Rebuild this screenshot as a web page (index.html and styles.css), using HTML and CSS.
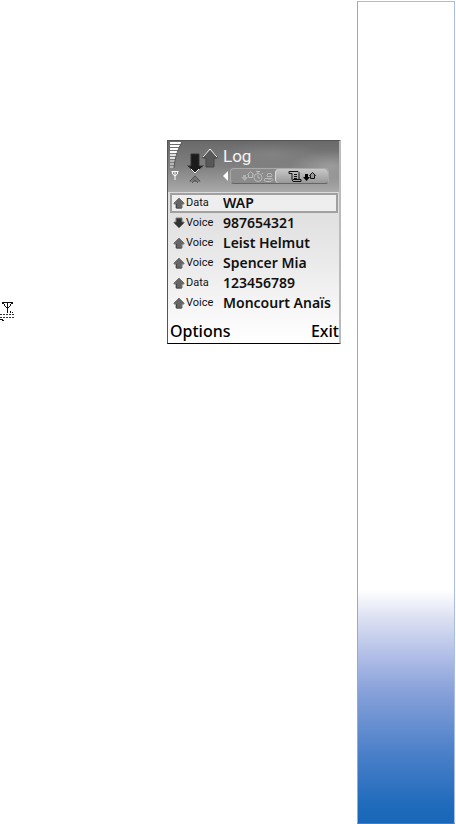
FILE: index.html
```html
<!DOCTYPE html>
<html lang="en">
<head>
  <meta charset="UTF-8" />
  <meta name="viewport" content="width=device-width, initial-scale=1.0"/>
  <title>Log</title>
  <link rel="stylesheet" href="styles.css">
</head>
<body>

  <main class="page">
    <!-- Network symbol in the margin -->
    <svg class="margin-icon" width="14" height="20" viewBox="0 0 14 20" shape-rendering="crispEdges" aria-hidden="true">
      <path d="M2 0h11v1H2zM2 1h2v1H2zM11 1h2v1h-2zM4 2h1v2H4zM10 2h1v2h-1zM5 4h1v1H5zM9 4h1v1H9zM6 5h3v1H6zM7 1h1v10H7z" fill="#111"/>
      <path d="M10 9h1v2h-1zM12 10h1v1h-1zM0 17h3v1H0zM2 18h2v1H2z" fill="#111"/>
      <path d="M0 12.500h14M0 15.500h14" stroke="#333" stroke-dasharray="2 1"/>
    </svg>

    <!-- Phone screen -->
    <section class="phone">
      <header class="top">
        <svg class="status" width="54" height="50" viewBox="0 0 54 50" aria-hidden="true">
          <!-- Signal bars -->
          <g fill="#fff" shape-rendering="crispEdges">
            <path d="M2 1h11v2H2zM2 4h10v2H2zM2 7h9v2H2zM2 10h8v2H2z"/>
            <path d="M2 13h7v2H2zM2 16h6v2H2z" fill="#e2e2e2"/>
            <path d="M2 19h5v2H2zM2 22h5v2H2zM2 25h4v2H2z" fill="#b8b8b8"/>
          </g>
          <path d="M14 1C10 8 7 16 6 27" fill="none" stroke="#555"/>
          <!-- Antenna -->
          <path d="M3.500 30.500h7M4.500 31v2l2.500 2 2.500-2v-2M7 30v9" fill="none" stroke="#fff"/>
          <!-- Up arrow -->
          <path d="M42 8l7 7v2h-3v9h-8v-9h-3v-2z" fill="#585858" stroke="#444"/>
          <path d="M35 16l7-8 7 8" fill="none" stroke="#fff"/>
          <!-- Down arrow -->
          <path d="M23 13h8v12h5l-9 7-8-7h4z" fill="#1b1b1b" stroke="#333"/>
          <path d="M19 25l8 7 9-7" fill="none" stroke="#888"/>
          <path d="M23 28l4 4 4-4" fill="none" stroke="#fff"/>
          <!-- Reflection -->
          <path d="M21 41l6-7 6 7z" fill="#777"/>
          <path d="M22 40l5-5 5 5M24 42l3-3 3 3" fill="none" stroke="#555"/>
        </svg>
        <div class="heading">
          <h1 class="title">Log</h1>
          <nav class="tabs">
            <svg class="previous" width="5" height="10" viewBox="0 0 5 10" aria-hidden="true"><path d="M5 0v10L0 5z" fill="#fff"/></svg>
            <div class="tab-bar">
              <button class="tab" type="button" aria-label="Counters">
                <svg width="34" height="13" viewBox="0 0 34 13" fill="none" stroke="#bbb" aria-hidden="true">
                  <path d="M3 5h3v2h2l-3 4-4-4h2z" fill="#b0b0b0" stroke="none"/>
                  <path d="M10.500 1.500l3 3h-1v3h-4v-3h-1z"/>
                  <circle cx="18" cy="7.500" r="4"/>
                  <path d="M16 1.500h4M18 1v3M18 5v3h2M22 4l1-1"/>
                  <path d="M28 3.500h3l1 2-1 1h-3l-1-1zM27 6.500h5M25 8.500h7l1 1-2 2h-5l-2-1zM28 9h3"/>
                </svg>
              </button>
              <button class="tab active" type="button" aria-label="Recent events">
                <svg width="29" height="13" viewBox="0 0 29 13" aria-hidden="true">
                  <path d="M3 3.500h-2v-2h9l1 1v7h2v2H5l-1-2v-6H1M6 4.500h3M6 6.500h3M6 8.500h3M5 9.500h6" fill="none" stroke="#111"/>
                  <path d="M17 4h3v3h2l-3.500 4L15 7h2z" fill="#000"/>
                  <path d="M24.500 2.500l3 3h-1v3h-4v-3h-1z" fill="#999" stroke="#111"/>
                </svg>
              </button>
            </div>
          </nav>
        </div>
      </header>

      <!-- Shared row arrows -->
      <svg class="symbols" aria-hidden="true">
        <symbol id="up" viewBox="0 0 12 12"><path d="M6 1l5 5v1H9v4H3V7H1V6z" fill="#666" stroke="#777"/><path d="M3.500 7v4h5" fill="none" stroke="#444"/></symbol>
        <symbol id="down" viewBox="0 0 12 12"><path d="M3 1h6v4h2v1l-5 5-5-5V5h2z" fill="#333" stroke="#777"/></symbol>
      </svg>

      <!-- Log entries -->
      <ul class="log">
        <li class="entry selected"><svg class="arrow"><use href="#up"/></svg><span class="type">Data</span><span class="name">WAP</span></li>
        <li class="entry"><svg class="arrow"><use href="#down"/></svg><span class="type">Voice</span><span class="name">987654321</span></li>
        <li class="entry"><svg class="arrow"><use href="#up"/></svg><span class="type">Voice</span><span class="name">Leist Helmut</span></li>
        <li class="entry"><svg class="arrow"><use href="#up"/></svg><span class="type">Voice</span><span class="name">Spencer Mia</span></li>
        <li class="entry"><svg class="arrow"><use href="#up"/></svg><span class="type">Data</span><span class="name">123456789</span></li>
        <li class="entry"><svg class="arrow"><use href="#up"/></svg><span class="type">Voice</span><span class="name">Moncourt Anaïs</span></li>
      </ul>

      <!-- Softkeys -->
      <footer class="softkeys">
        <button class="softkey" type="button">Options</button>
        <button class="softkey" type="button">Exit</button>
      </footer>
    </section>
  </main>

  <!-- Blue strip at the page edge -->
  <aside class="strip"></aside>

</body>
</html>
```
FILE: styles.css
```css
* {
  box-sizing: border-box;
}

/* Page base styles */
body {
  display: flex;
  min-height: 100vh;
  margin: 0;
  padding: 1px 1px 0 0;
  background: #fff;
  color: #111;
  font-family: "Noto Sans", sans-serif;
}

.page {
  display: flex;
  flex: 1;
  align-items: flex-start;
  justify-content: space-between;
  padding: 139px 16px 0 0;
}

.margin-icon {
  margin-top: 162px;
}

/* Side strip */
.strip {
  width: 98px;
  border: 1px solid #a9bce6;
  border-left-color: #93a8dc;
  border-bottom-color: #3f7cc8;
  background: linear-gradient(to top, #1967b9 0, #1e6abb 16px, #4b80c9 70px, #86a0d9 130px, #adbbe6 164px, #dde1f2 206px, #fff 233px);
}

/* Phone screen */
.phone {
  width: 174px;
  border: 1px solid #555;
  border-right: 2px solid #bbb;
  border-bottom-color: #000;
  background: linear-gradient(#dcdcdc 52px, #eaeaea 120px, #fff);
}

.top {
  display: flex;
  height: 51px;
  background:
    radial-gradient(ellipse 50px 12px at 60% 25%, rgba(160, 160, 160, 0.3), transparent),
    radial-gradient(ellipse 40px 16px at 95% 50%, rgba(175, 175, 175, 0.6), transparent),
    linear-gradient(#6a6a6a, #808080 50%, #aaa);
}

.status {
  flex: none;
}

.heading {
  flex: 1;
  padding-top: 4px;
}

.title {
  margin: 0;
  padding-left: 1px;
  color: #f4f4f4;
  font: 17px/23px Roboto, sans-serif;
}

/* Tabs */
.tabs {
  display: flex;
  align-items: center;
  gap: 2px;
  padding-left: 1px;
}

.tab-bar {
  display: flex;
  height: 16px;
  border: 1px solid #aaa;
  border-bottom-color: #666;
  border-radius: 4px;
  background: #8b8b8b;
}

.tab {
  display: flex;
  align-items: center;
  justify-content: center;
  width: 44px;
  padding: 0 0 0 8px;
  border: 0;
  background: none;
}

.tab.active {
  width: 53px;
  padding: 0;
  border-left: 1px solid #ddd;
  border-radius: 4px;
  background: linear-gradient(#c8c8c8, #999);
}

/* Log list */
.symbols {
  display: none;
}

.log {
  margin: 0;
  padding: 1px 1px 0 2px;
  list-style: none;
}

.entry {
  display: flex;
  align-items: center;
  height: 20px;
  padding-left: 1px;
  border: 2px solid transparent;
  white-space: nowrap;
}

.entry.selected {
  border-color: #a0a0a0;
  background: #eee;
}

.arrow {
  flex: none;
  width: 12px;
  height: 12px;
}

.type {
  width: 38px;
  padding-left: 1px;
  font: 11px/16px Roboto, sans-serif;
}

.name {
  font-size: 14px;
  font-weight: 600;
  line-height: 16px;
}

/* Softkeys */
.softkeys {
  display: flex;
  justify-content: space-between;
  padding: 7px 0 1px 2px;
}

.softkey {
  padding: 0;
  border: 0;
  background: none;
  color: #000;
  font: 500 16px/22px "Noto Sans", sans-serif;
}
```
